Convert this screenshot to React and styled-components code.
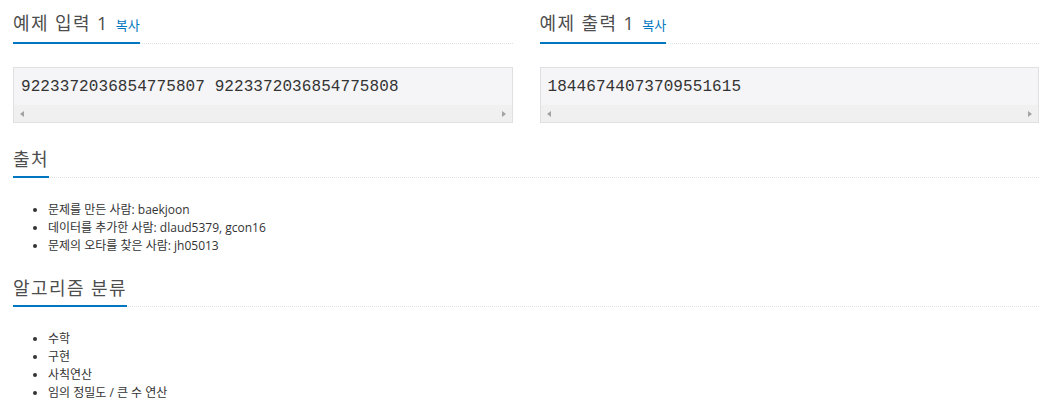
import styled, { createGlobalStyle } from "styled-components";

const GlobalStyle = createGlobalStyle`
  body {
    margin: 0;
    background: #fff;
    font-family: "Open Sans", "Noto Sans CJK KR", sans-serif;
    color: #333;
  }
`;

const samples = [
  { title: "예제 입력 1", text: "9223372036854775807 9223372036854775808" },
  { title: "예제 출력 1", text: "18446744073709551615" },
];

const sources = [
  "문제를 만든 사람: baekjoon",
  "데이터를 추가한 사람: dlaud5379, gcon16",
  "문제의 오타를 찾은 사람: jh05013",
];

const tags = ["수학", "구현", "사칙연산", "임의 정밀도 / 큰 수 연산"];

const App = () => {
  return (
    <Page>
      <GlobalStyle />
      <SampleRow>
        {samples.map((s) => (
          <Section key={s.title}>
            <Headline>
              <Title>
                {s.title}
                <CopyLink>복사</CopyLink>
              </Title>
            </Headline>
            <SampleBox>
              <SampleText>{s.text}</SampleText>
              <ScrollBar>
                <Arrow />
                <Arrow right />
              </ScrollBar>
            </SampleBox>
          </Section>
        ))}
      </SampleRow>
      <Section>
        <Headline>
          <Title>출처</Title>
        </Headline>
        <List>
          {sources.map((t) => (
            <li key={t}>{t}</li>
          ))}
        </List>
      </Section>
      <Section>
        <Headline>
          <Title>알고리즘 분류</Title>
        </Headline>
        <List>
          {tags.map((t) => (
            <li key={t}>{t}</li>
          ))}
        </List>
      </Section>
    </Page>
  );
};

const Page = styled.div`
  padding: 11px 11px 0 13px;
`;

const SampleRow = styled.div`
  display: grid;
  grid-template-columns: 1fr 1fr;
  column-gap: 27px;
`;

const Section = styled.section`
  margin-bottom: 21px;
`;

const Headline = styled.div`
  border-bottom: 1px dotted #dfe4ea;
  margin-bottom: 23px;
`;

const Title = styled.h2`
  display: inline-block;
  margin: 0 0 -1px 0;
  padding-bottom: 5px;
  border-bottom: 2px solid #0076c0;
  font-size: 18px;
  line-height: 24px;
  letter-spacing: 1.4px;
  font-weight: 400;
  color: #4d4d4d;
`;

const CopyLink = styled.a`
  margin-left: 7px;
  font-size: 13px;
  letter-spacing: 0;
  color: #0076c0;
  cursor: pointer;
`;

const SampleBox = styled.div`
  margin-bottom: 3px;
  border: 1px solid #e0e0e3;
  background: #f5f5f7;
`;

const SampleText = styled.pre`
  margin: 0;
  padding: 9px 7px 8px;
  font-family: "Liberation Mono", monospace;
  font-size: 16px;
  line-height: 20px;
  letter-spacing: 0.08px;
  color: #333;
`;

const ScrollBar = styled.div`
  height: 17px;
  background: #f0f0f0;
  display: flex;
  align-items: center;
  justify-content: space-between;
  padding: 0 6px;
`;

const Arrow = styled.span`
  width: 0;
  height: 0;
  border-top: 3.5px solid transparent;
  border-bottom: 3.5px solid transparent;
  ${(p) =>
    p.right
      ? "border-left: 4px solid #a3a3a3;"
      : "border-right: 4px solid #a3a3a3;"}
`;

const List = styled.ul`
  margin: 0;
  padding-left: 35px;
  font-size: 12px;
  line-height: 18px;
  color: #333;
`;

export default App;
